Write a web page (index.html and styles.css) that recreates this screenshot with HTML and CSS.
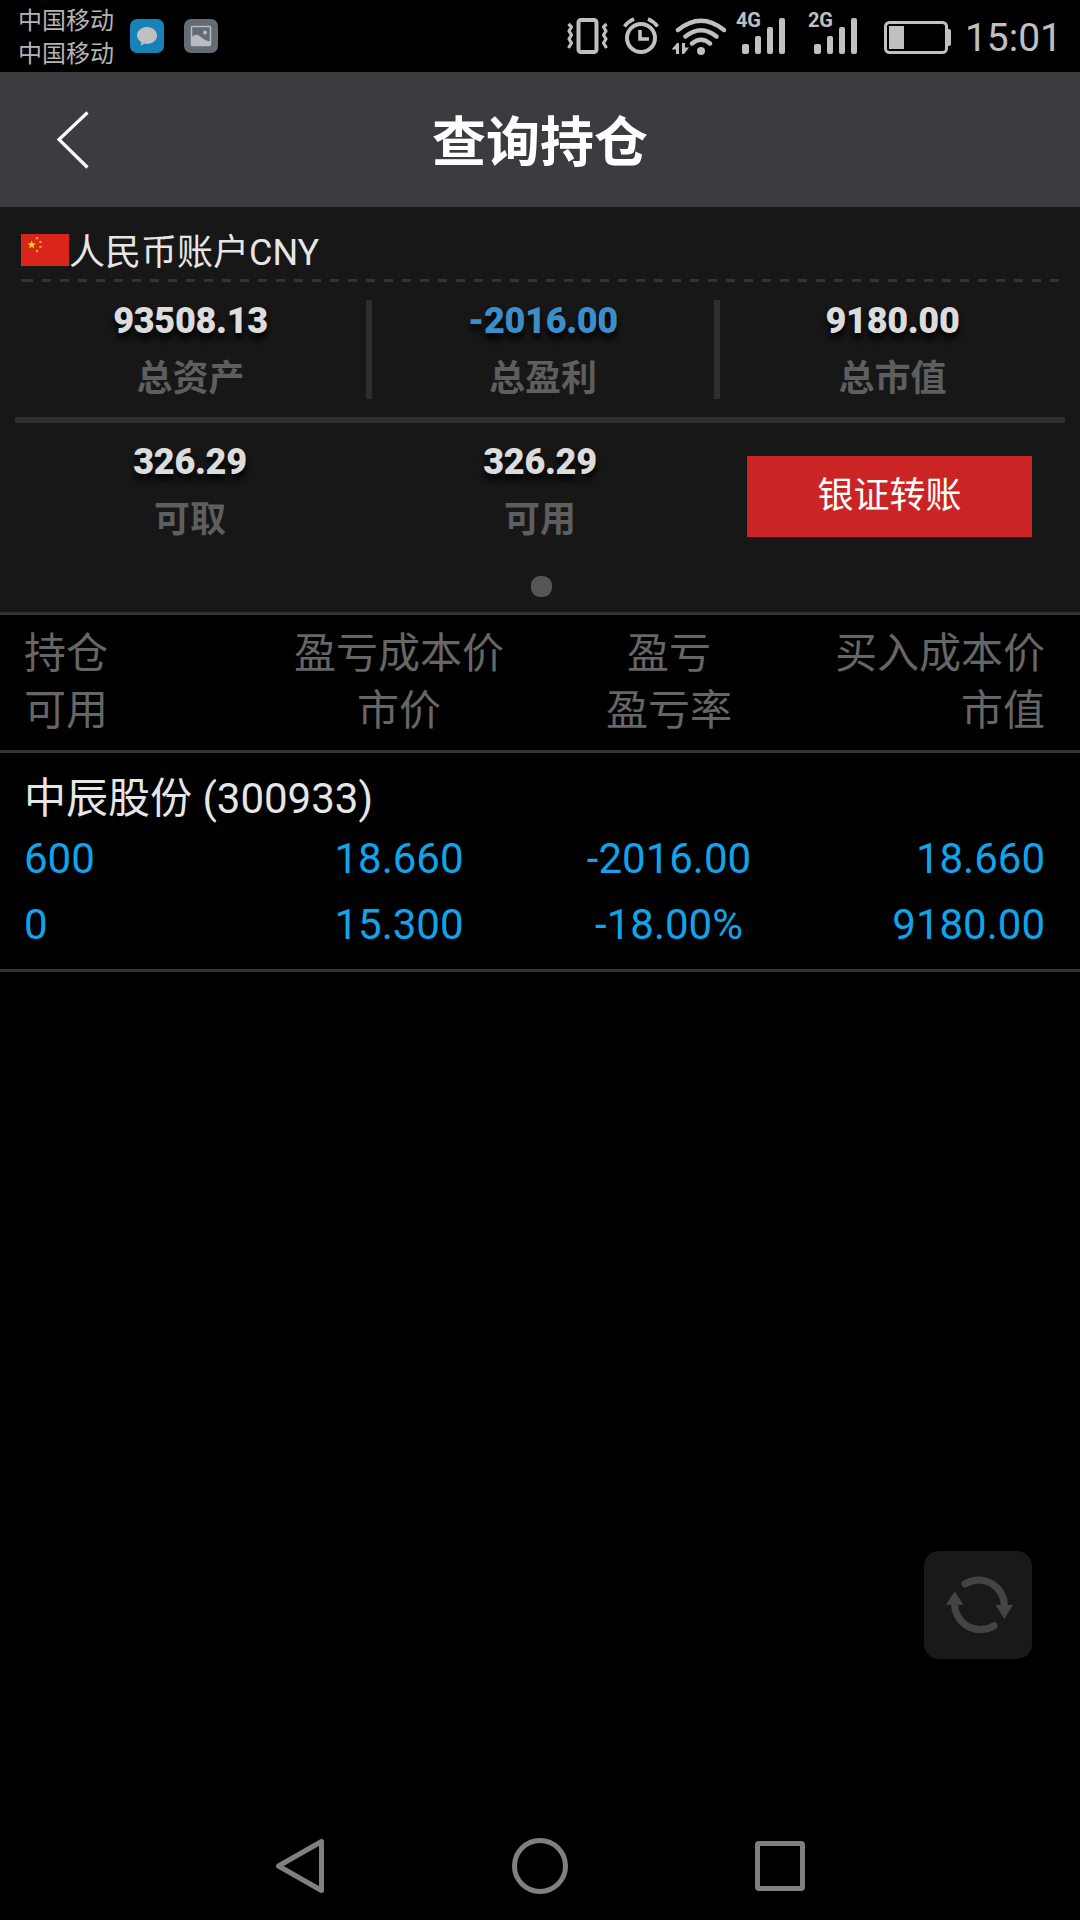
FILE: index.html
```html
<!DOCTYPE html>
<html lang="zh-CN">
<head>
  <meta charset="UTF-8">
  <meta name="viewport" content="width=device-width, initial-scale=1.0">
  <title>查询持仓</title>
  <link rel="stylesheet" href="styles.css">
</head>
<body>

<div class="status-bar">
  <div class="carriers">
    <div>中国移动</div>
    <div>中国移动</div>
  </div>
  <svg class="app-icon" viewBox="0 0 34 34">
    <rect width="34" height="34" rx="7" fill="#1682b8"/>
    <path d="M17 8c5.600 0 10 3.800 10 8.500s-4.400 8.500-10 8.500c-1 0-2-.1-2.900-.4-.9.900-2 1.600-3.600 2.100.6-1.100.9-2.200.8-3.500C8.700 21.600 7 19.200 7 16.500 7 11.800 11.400 8 17 8z" fill="#c0c0c0"/>
  </svg>
  <svg class="app-icon" viewBox="0 0 34 34">
    <rect width="34" height="34" rx="7" fill="#636c74"/>
    <rect x="7.500" y="7.500" width="19" height="19" rx="1" fill="none" stroke="#b9bcbe" stroke-width="1.500"/>
    <circle cx="21" cy="13.500" r="2" fill="#b9bcbe"/>
    <path d="M8 18c2-2.500 5-3 7.500-1 3 2.500 6 5 11 5.500v4H8z" fill="#b9bcbe"/>
  </svg>

  <div class="status-right">
    <!-- vibrate -->
    <svg class="icon-vibrate" width="42" height="72" viewBox="0 0 42 72" fill="none" stroke="#c0c0c0">
      <rect x="11.500" y="20" width="18" height="32" rx="2.500" stroke-width="4"/>
      <path d="M1.500 24l3 3-2.500 4 2.500 4-2.500 4 2.500 4-3 5M39.500 24l-3 3 2.500 4-2.500 4 2.500 4-2.500 4 3 5" stroke-width="3.200" stroke-linejoin="round"/>
    </svg>
    <!-- alarm -->
    <svg class="icon-alarm" width="38" height="72" viewBox="0 0 38 72" fill="none" stroke="#c0c0c0" stroke-width="4">
      <circle cx="19" cy="38" r="14"/>
      <path d="M18 30v9h9" stroke-width="3.600"/>
      <path d="M2.500 26.500Q6 21.500 12 19M35.500 26.500Q32 21.500 26 19" stroke-width="3.600"/>
    </svg>
    <!-- wifi -->
    <svg class="icon-wifi" width="56" height="72" viewBox="0 0 56 72" fill="none" stroke="#c0c0c0" stroke-width="4.400" stroke-linecap="round">
      <path d="M8 30Q31 11.500 54 30M15.500 36.500Q31 24 46.500 36.500M22 43.500Q31 36 40 43.500"/>
      <circle cx="31" cy="51" r="4" fill="#c0c0c0" stroke="none"/>
      <path d="M2 49l5-6h2v11H6v-4.500H2zM12 54V43h3v4.500h4l-5 6.500z" fill="#c0c0c0" stroke="none"/>
    </svg>
    <div class="signal">
      <span class="net">4G</span>
      <span class="bars"><i class="b1"></i><i class="b2"></i><i class="b3"></i><i class="b4"></i></span>
    </div>
    <div class="signal">
      <span class="net">2G</span>
      <span class="bars"><i class="b1"></i><i class="b2"></i><i class="b3"></i><i class="b4"></i></span>
    </div>
    <!-- battery -->
    <svg class="icon-battery" width="68" height="72" viewBox="0 0 68 72">
      <rect x="1.500" y="22.500" width="61" height="30" rx="4" fill="none" stroke="#c0c0c0" stroke-width="3"/>
      <rect x="5" y="26" width="15" height="23" fill="#c0c0c0"/>
      <path d="M63 29h2q2 0 2 2v13q0 2-2 2h-2z" fill="#c0c0c0"/>
    </svg>
    <div class="clock">15:01</div>
  </div>
</div>

<header class="top-bar">
  <svg class="back" width="34" height="62" viewBox="0 0 34 62">
    <path d="M31.500 3.500L3 30.500l28.500 28" fill="none" stroke="#fff" stroke-width="3.200"/>
  </svg>
  <h1>查询持仓</h1>
</header>

<section class="account">
  <div class="account-name">
    <svg class="flag" width="48" height="32" viewBox="0 0 48 32">
      <rect width="48" height="32" fill="#da251d"/>
      <path d="M10.700 6.600l1.100 2.900h3l-2.400 1.900.9 3-2.600-1.800-2.600 1.800.9-3-2.400-1.900h3z" fill="#ffe000"/>
      <g fill="#e8a317">
        <circle cx="16" cy="4.300" r="1.300"/>
        <circle cx="19.500" cy="8" r="1.300"/>
        <circle cx="19.500" cy="13" r="1.300"/>
        <circle cx="16" cy="17" r="1.300"/>
      </g>
    </svg>
    <span>人民币账户CNY</span>
  </div>
  <div class="dashed"></div>

  <div class="totals">
    <div class="stat">
      <b>93508.13</b>
      <span>总资产</span>
    </div>
    <div class="stat">
      <b class="loss">-2016.00</b>
      <span>总盈利</span>
    </div>
    <div class="stat">
      <b>9180.00</b>
      <span>总市值</span>
    </div>
  </div>

  <div class="funds">
    <div class="stat">
      <b>326.29</b>
      <span>可取</span>
    </div>
    <div class="stat">
      <b>326.29</b>
      <span>可用</span>
    </div>
    <div class="stat">
      <button class="transfer">银证转账</button>
    </div>
  </div>
  <div class="dot"></div>
</section>

<section class="columns table-head">
  <div>持仓<br>可用</div>
  <div>盈亏成本价<br>市价</div>
  <div>盈亏<br>盈亏率</div>
  <div>买入成本价<br>市值</div>
</section>

<section class="position">
  <div class="stock">中辰股份 (300933)</div>
  <div class="columns values">
    <div>600<br>0</div>
    <div>18.660<br>15.300</div>
    <div>-2016.00<br>-18.00%</div>
    <div>18.660<br>9180.00</div>
  </div>
</section>

<!-- floating refresh button -->
<div class="refresh">
  <svg width="108" height="108" viewBox="0 0 324 324">
    <g fill="none" stroke="#444" stroke-width="21" stroke-linecap="round">
      <path d="M123 99A77 77 0 0 1 241 166"/>
      <path d="M210 224A77 77 0 0 1 92 158"/>
    </g>
    <path d="M215 162h52l-26 42zM66 161h52l-26-40z" fill="#444"/>
  </svg>
</div>

<nav class="nav-bar">
  <svg width="60" height="60" viewBox="0 0 60 60">
    <path d="M8.500 30L51.500 5.500v49z"/>
  </svg>
  <svg width="60" height="60" viewBox="0 0 60 60">
    <circle cx="30" cy="30" r="25.500"/>
  </svg>
  <svg width="60" height="60" viewBox="0 0 60 60">
    <rect x="7.500" y="7.500" width="45" height="45" rx="1.500"/>
  </svg>
</nav>

</body>
</html>
```

FILE: styles.css
```css
* {
  box-sizing: border-box;
}

body {
  margin: 0;
  height: 1920px;
  display: flex;
  flex-direction: column;
  background-color: #000;
  font-family: Roboto, "Noto Sans CJK SC", sans-serif;
  overflow: hidden;
}

svg {
  display: block;
  flex: none;
}

/* Barra de estado */
.status-bar {
  height: 72px;
  display: flex;
  padding: 0 18px;
  color: #c0c0c0;
}

.carriers {
  width: 112px;
  padding-top: 5px;
  font-size: 24px;
  line-height: 33px;
  white-space: nowrap;
  color: #b4b4b4;
}

.app-icon {
  width: 34px;
  height: 34px;
  margin: 19px 20px 0 0;
}

.status-right {
  display: flex;
  margin-left: auto;
}

.icon-alarm {
  margin-left: 13px;
}

.icon-wifi {
  margin-left: 10px;
}

.signal {
  position: relative;
  width: 49px;
  height: 72px;
  margin-left: 10px;
}

.signal + .signal {
  margin-left: 23px;
}

.net {
  position: absolute;
  left: 0;
  top: 8px;
  font-size: 20px;
  line-height: 24px;
  font-weight: 700;
}

.bars {
  display: flex;
  align-items: flex-end;
  justify-content: space-between;
  height: 54px;
  padding-left: 6px;
}

.bars i {
  width: 6px;
  border-radius: 2px;
  background-color: #c0c0c0;
}

.bars .b1 {
  width: 7px;
  height: 10px;
}

.bars .b2 {
  height: 18px;
}

.bars .b3 {
  height: 27px;
}

.bars .b4 {
  height: 36px;
}

.icon-battery {
  margin-left: 27px;
}

.clock {
  margin-left: 13px;
  font-size: 39px;
  line-height: 76px;
}

/* Cabecera */
.top-bar {
  height: 135px;
  display: flex;
  align-items: center;
  padding-left: 56px;
  background-color: #3c3b40;
}

.top-bar h1 {
  flex: 1;
  margin: 0 90px 0 0;
  padding-top: 8px;
  font-size: 54px;
  line-height: 70px;
  font-weight: 700;
  text-align: center;
  color: #fff;
}

/* Cuenta */
.account {
  height: 408px;
  padding: 18px 15px 0;
  background-color: #171717;
  border-bottom: 3px solid #333;
}

.account-name {
  display: flex;
  height: 54px;
  padding-left: 6px;
  font-size: 36px;
  line-height: 56px;
  color: #e6e6e6;
}

.flag {
  margin-top: 9px;
}

.dashed {
  height: 3px;
  margin: 0 6px 18px;
  background: linear-gradient(#333, #333) 0 0 / 12px 3px no-repeat,
    repeating-linear-gradient(to right, #333 0 9px, transparent 9px 18px) 3px 0;
}

.totals {
  display: grid;
  grid-template-columns: 357px 348px 345px;
  padding-bottom: 18px;
  border-bottom: 6px solid #2e2e2e;
}

.totals .stat {
  height: 99px;
  border-right: 6px solid #2e2e2e;
}

.totals .stat:last-child {
  border-right: 0;
}

.funds {
  display: grid;
  grid-template-columns: repeat(3, 350px);
  padding-top: 18px;
}

.stat {
  display: flex;
  flex-direction: column;
  align-items: center;
  gap: 16px;
  font-size: 36px;
  line-height: 42px;
  font-weight: 700;
}

.stat b {
  letter-spacing: -0.3px;
  color: #dcdcdc;
  text-shadow: 0 6px 6px #000;
}

.stat .loss {
  color: #3d8dc9;
}

.stat span {
  color: #5e5e5e;
}

.transfer {
  width: 285px;
  height: 81px;
  margin: 15px 1px 0 0;
  padding: 0 0 2px;
  border: 0;
  background-color: #cb2424;
  color: #fff;
  font-family: inherit;
  font-size: 36px;
  line-height: 42px;
}

.dot {
  width: 21px;
  height: 21px;
  margin: 35px auto 0;
  position: relative;
  left: 1px;
  border-radius: 9px;
  background-color: #555;
}

/* Tabla de posiciones */
.columns {
  display: grid;
  grid-template-columns: 240px 270px 270px 1fr;
  padding: 0 35px 0 24px;
  text-align: center;
  font-size: 42px;
}

.columns div:first-child {
  text-align: left;
}

.columns div:last-child {
  text-align: right;
}

.table-head {
  height: 138px;
  padding-top: 10px;
  line-height: 57px;
  color: #666;
  border-bottom: 3px solid #333;
}

.position {
  height: 219px;
  padding-top: 18px;
  border-bottom: 3px solid #333;
}

.stock {
  padding-left: 24px;
  font-size: 42px;
  line-height: 56px;
  color: #e6e6e6;
}

.values {
  margin-top: -1px;
  line-height: 66px;
  color: #0fa4ec;
}

.refresh {
  position: absolute;
  left: 924px;
  top: 1551px;
  width: 108px;
  height: 108px;
  border-radius: 15px;
  background-color: #191919;
}

/* Botones de navegacion */
.nav-bar {
  display: flex;
  justify-content: center;
  gap: 180px;
  margin-top: auto;
  padding-bottom: 24px;
}

.nav-bar path,
.nav-bar circle,
.nav-bar rect {
  fill: none;
  stroke: #808080;
  stroke-width: 5;
  stroke-linejoin: round;
}
```
